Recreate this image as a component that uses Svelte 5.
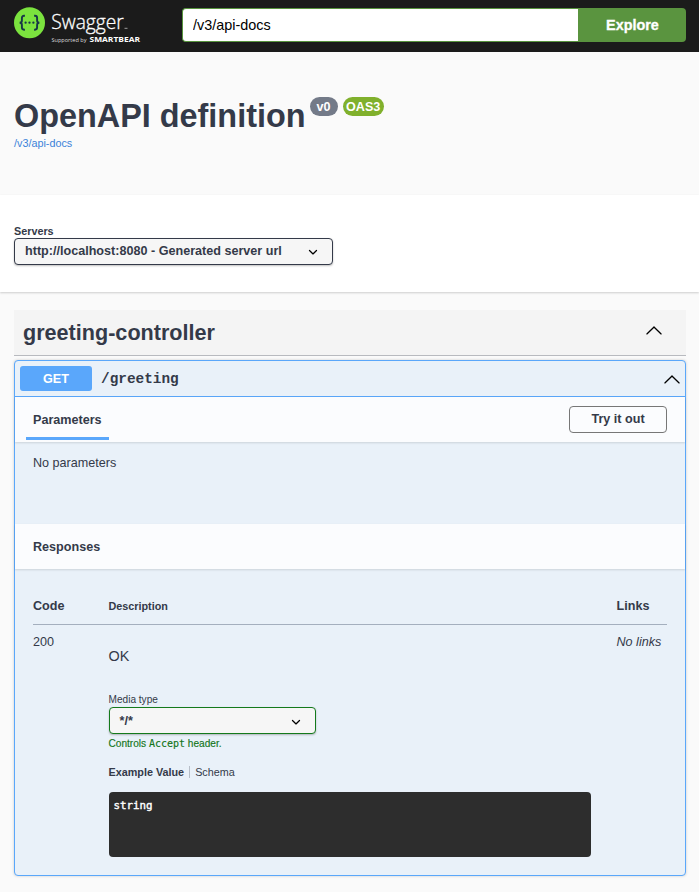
<script>
  let url = $state('/v3/api-docs');
</script>

{#snippet chevron(w)}
  <svg class="chev" width={w} height={w} viewBox="0 0 20 20"><path d="M13.418 7.859a.695.695 0 0 1 .978 0 .68.68 0 0 1 0 .969l-3.908 3.83a.697.697 0 0 1-.979 0l-3.908-3.83a.68.68 0 0 1 0-.969.695.695 0 0 1 .978 0L10 11z" /></svg>
{/snippet}

{#snippet arrowUp()}
  <svg class="arrow" width="18" height="18" viewBox="0 0 20 20"><path d="M17.418 14.908c.272.281.709.281.979 0s.271-.741 0-1.026l-7.908-7.831c-.271-.28-.709-.28-.979 0L1.602 13.882c-.272.285-.272.745 0 1.026s.709.281.979 0L10 7.767z" /></svg>
{/snippet}

<div class="page">
  <header class="topbar">
    <svg class="logo" width="130" height="40" viewBox="0 0 130 40">
      <circle cx="15.5" cy="15.7" r="15.5" fill="#7be33e" />
      <g fill="none" stroke="#173647" stroke-width="1.9">
        <path d="M10.9 8.8h-.9q-2.1 0-2.1 2.1v2.5q0 2.3-2.3 2.3 2.3 0 2.3 2.3v2.6q0 2.1 2.1 2.1h.9" />
        <path d="M20.1 8.8h.9q2.1 0 2.1 2.1v2.5q0 2.3 2.3 2.3-2.3 0-2.3 2.3v2.6q0 2.1-2.1 2.1h-.9" />
      </g>
      <g fill="#173647"><circle cx="11.6" cy="15.7" r="1.15" /><circle cx="15.5" cy="15.7" r="1.15" /><circle cx="19.4" cy="15.7" r="1.15" /></g>
      <text x="37.3" y="22" font-size="20" font-weight="300" textLength="72.5" lengthAdjust="spacingAndGlyphs" fill="#fff" stroke="#fff" stroke-width=".3">Swagger</text>
      <path d="M110.5 21.3h3" stroke="#aaa" stroke-width=".9" />
      <text x="37.5" y="34.5" font-size="6" textLength="35" lengthAdjust="spacingAndGlyphs" fill="#ddd">Supported by</text>
      <text x="75.5" y="34.5" font-size="6.6" font-weight="700" textLength="50.5" lengthAdjust="spacingAndGlyphs" fill="#fff">SMARTBEAR</text>
    </svg>
    <form class="search">
      <input type="text" bind:value={url} aria-label="API definition" />
      <button type="button">Explore</button>
    </form>
  </header>

  <section class="info">
    <h1>OpenAPI definition<span class="badges"><span class="badge">v0</span><span class="badge oas">OAS3</span></span></h1>
    <a href="#docs">/v3/api-docs</a>
  </section>

  <section class="servers">
    <span class="label">Servers</span>
    <div class="select server">http://localhost:8080 - Generated server url{@render chevron(18)}</div>
  </section>

  <main>
    <div class="tag"><h2>greeting-controller</h2>{@render arrowUp()}</div>
    <article class="op">
      <div class="summary">
        <span class="method">GET</span><span class="path">/greeting</span>{@render arrowUp()}
      </div>
      <div class="bar">
        <div class="tab">Parameters</div>
        <button class="try" type="button">Try it out</button>
      </div>
      <p class="none">No parameters</p>
      <div class="bar"><h4>Responses</h4></div>
      <div class="responses">
        <div class="row head"><b>Code</b><b class="small">Description</b><b>Links</b></div>
        <div class="row">
          <span>200</span>
          <div class="desc">
            <p class="ok">OK</p>
            <div class="media">Media type</div>
            <div class="select accept">*/*{@render chevron(18)}</div>
            <div class="hint">Controls <code>Accept</code> header.</div>
            <div class="tabs"><b>Example Value</b><span>Schema</span></div>
            <pre>string</pre>
          </div>
          <i>No links</i>
        </div>
      </div>
    </article>
  </main>
</div>

<style>
  :global(body) { background: #fafafa; }
  * { box-sizing: border-box; }
  .page { height: 892px; overflow: hidden; background: #fafafa; color: #343a49; font: 12.6px/16px "Liberation Sans", Arial, sans-serif; }
  h1, h2, h4, p, pre { margin: 0; }
  button, input { font-family: inherit; }
  svg { display: block; flex: none; }

  .topbar { height: 52px; background: #1b1b1b; padding: 0 13px 2px 14px; display: flex; align-items: center; }
  .logo { font-family: "Open Sans", sans-serif; margin-top: 3px; }
  .search { display: flex; flex: 1; margin-left: 38px; height: 34px; }
  .search input { flex: 1; min-width: 0; border: 1px solid #57943d; border-right: 0; border-radius: 4px 0 0 4px; padding: 0 10px; font-size: 14.4px; color: #000; background: #fff; outline: none; }
  .search button { width: 108px; border: 0; border-radius: 0 4px 4px 0; background: #5a943f; color: #fff; font-size: 14.4px; font-weight: 700; padding: 0 0 0 1px; -webkit-text-stroke: .3px #fff; }

  .info { height: 143px; padding: 45px 14px 0; }
  h1 { font-size: 32.4px; line-height: 38px; height: 38px; display: flex; white-space: nowrap; }
  .badges { display: flex; gap: 5px; margin-left: 4px; }
  .badge { height: 19px; padding: 0 7px; border-radius: 10px; background: #737a88; color: #fff; font-size: 12.6px; line-height: 20px; }
  .badge.oas { background: #80b02c; padding: 0 3.5px; }
  .info a { display: block; color: #3b82d9; font-size: 10.8px; line-height: 14px; margin-top: 1px; text-decoration: none; }

  .servers { height: 97px; background: #fff; padding: 29px 14px 0; box-shadow: 0 1px 2px rgba(0, 0, 0, .18); }
  .label { display: block; font-size: 10.8px; font-weight: 700; line-height: 14px; }
  .select { display: flex; align-items: center; justify-content: space-between; height: 27px; background: #f6f6f6; border: 1px solid #343a49; border-radius: 4px; box-shadow: 0 1px 2px rgba(0, 0, 0, .25); padding: 0 10px; font-weight: 700; }
  .server { width: 319px; padding-bottom: 1px; }
  .chev { position: relative; top: 1px; }

  main { padding: 18px 13px 0 14px; }
  .tag { display: flex; align-items: center; justify-content: space-between; height: 46px; background: #f4f4f4; border-bottom: 1px solid #b8babf; padding: 0 23px 0 9px; }
  h2 { font-size: 21.6px; line-height: 26px; }
  .tag .arrow { margin-top: -5px; }
  .op { margin-top: 4px; height: 516px; border: 1px solid #5aa7fa; border-radius: 4px; background: #e9f1f9; box-shadow: 0 0 3px rgba(0, 0, 0, .19); }
  .summary { height: 36px; border-bottom: 1px solid #5aa7fa; display: flex; align-items: center; padding: 0 5px; }
  .method { width: 72px; height: 25px; line-height: 26px; border-radius: 3px; background: #5aa7fb; color: #fff; font-weight: 700; text-align: center; }
  .path { font: 700 14.4px/20px "Liberation Mono", "Courier New", monospace; margin-left: 9px; flex: 1; }
  .summary .arrow { margin-right: -1px; }
  .bar { height: 45px; display: flex; align-items: center; justify-content: space-between; background: #fbfcfe; box-shadow: 0 1px 2px rgba(0, 0, 0, .13); padding: 0 18px; }
  .tab { align-self: flex-start; height: 43px; margin-left: -7px; padding: 15px 7px 0; border-bottom: 3px solid #5aa7fb; font-weight: 700; }
  .try { width: 98px; height: 27px; border: 1px solid #777; border-radius: 4px; background: transparent; color: inherit; font-size: 12.6px; font-weight: 700; padding: 0 0 1px; }
  .none { height: 82px; padding: 13px 18px 0; }
  h4 { font-size: 12.6px; }
  .responses { padding: 18px; }
  .row { display: grid; grid-template-columns: 75.5px 508px 50px; padding-top: 9px; }
  .head { height: 38px; border-bottom: 1px solid #a4afbe; padding-top: 11px; }
  .small { font-size: 10.8px; }
  .ok { font-size: 14.4px; line-height: 18px; margin-top: 13px; }
  .media { font-size: 10.1px; line-height: 14px; margin-top: 28px; }
  .accept { width: 207px; border-color: #147a1c; padding-right: 10px; }
  .hint { color: #137519; font-size: 10.1px; line-height: 14px; margin-top: 3px; -webkit-text-stroke: .15px; }
  code { font-family: "DejaVu Sans Mono", monospace; font-size: 10px; }
  .tabs { display: flex; font-size: 10.8px; line-height: 12px; margin-top: 15px; }
  .tabs span { margin-left: 5px; padding-left: 5px; border-left: 1px solid #b7bec8; }
  pre { width: 482px; height: 65px; margin-top: 14px; border-radius: 4px; background: #2d2d2d; color: #fff; padding: 6px 5px; font: 400 10.8px/16px "DejaVu Sans Mono", monospace; -webkit-text-stroke: .4px #fff; }
</style>
